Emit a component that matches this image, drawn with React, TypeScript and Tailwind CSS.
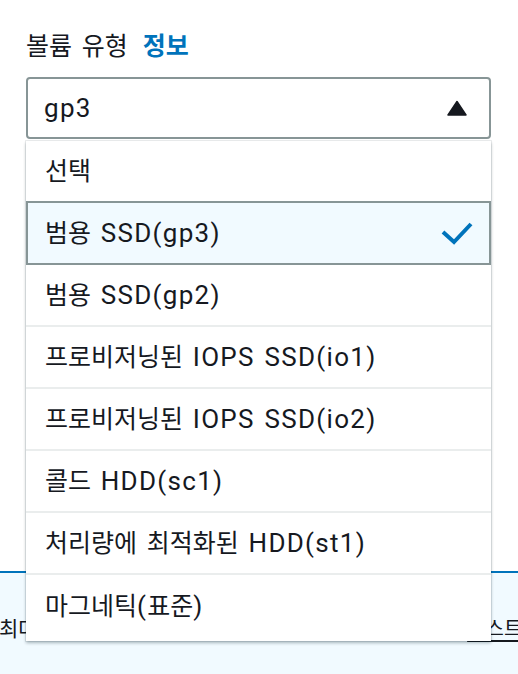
import React from "react";

const OPTIONS = [
  "선택",
  "범용 SSD(gp3)",
  "범용 SSD(gp2)",
  "프로비저닝된 IOPS SSD(io1)",
  "프로비저닝된 IOPS SSD(io2)",
  "콜드 HDD(sc1)",
  "처리량에 최적화된 HDD(st1)",
  "마그네틱(표준)",
];

function Mixed({ text }: { text: string }) {
  const parts = text.split(/([\uAC00-\uD7A3]+)/).filter((p) => p.length > 0);
  return (
    <span className="whitespace-pre">
      {parts.map((p, i) =>
        /[\uAC00-\uD7A3]/.test(p) ? (
          <span key={i} className="text-[25px]">
            {p}
          </span>
        ) : (
          <span key={i} className="text-[26px] tracking-[1.3px]">
            {p}
          </span>
        )
      )}
    </span>
  );
}

function Check() {
  return (
    <svg width="32" height="24" viewBox="0 0 32 24" fill="none">
      <polyline points="2,11 13,21 30,3" stroke="#0073bb" strokeWidth="4" strokeLinejoin="miter" />
    </svg>
  );
}

function Caret() {
  return (
    <svg width="20" height="16" viewBox="0 0 20 16">
      <path d="M10 1.5 L19 15 L1 15 Z" fill="#16191f" stroke="#16191f" strokeWidth="1.5" strokeLinejoin="round" />
    </svg>
  );
}

export default function App() {
  return (
    <div className="relative w-[518px] h-[674px] overflow-hidden bg-white text-[#16191f] font-[Roboto,'Noto_Sans_CJK_KR',sans-serif] leading-none [word-spacing:2px] flex flex-col">
      <div className="px-[26px]">
        <div className="mt-[30px] h-[32px] flex items-center">
          <Mixed text="볼륨 유형" />
          <span className="text-[25px] font-bold text-[#0073bb] ml-[15px]">정보</span>
        </div>
        <div className="mt-[15px] h-[62px] w-[465px] border-2 border-[#879596] rounded-[4px] flex items-center justify-between pl-[16px] pr-[22px]">
          <span className="text-[26px] tracking-[1.3px]">gp3</span>
          <Caret />
        </div>
      </div>

      <div className="mt-[432px] flex-1 border-t-2 border-[#0073bb] bg-[#f1faff]">
        <div className="mt-[42px] h-[28px] flex items-center whitespace-nowrap text-[21px] text-[#16191f]">
          <span className="w-[262px] ml-[-1px] shrink-0 overflow-hidden">최대 처리량</span>
          <span className="shrink-0">(선택)</span>
          <span className="ml-[153px] shrink-0 text-[20px] underline underline-offset-4">리스트 보기</span>
        </div>
      </div>

      <div className="absolute top-[141px] left-[26px] w-[465px] bg-white pb-[4px] shadow-[0_0_0_1px_rgba(0,28,36,0.08),0_2px_3px_0_rgba(0,28,36,0.3)]">
        {OPTIONS.map((opt, i) => {
          if (i === 1) {
            return (
              <div
                key={opt}
                className="relative -mt-[2px] h-[64px] border-2 border-[#879596] bg-[#f1faff] flex items-center justify-between pl-[17px] pr-[16px]"
              >
                <Mixed text={opt} />
                <Check />
              </div>
            );
          }
          const last = i === OPTIONS.length - 1;
          return (
            <div
              key={opt}
              className={
                last
                  ? "h-[62px] flex items-center pl-[19px]"
                  : "h-[62px] border-b-2 border-[#eaeded] flex items-center pl-[19px]"
              }
            >
              <Mixed text={opt} />
            </div>
          );
        })}
      </div>
    </div>
  );
}
